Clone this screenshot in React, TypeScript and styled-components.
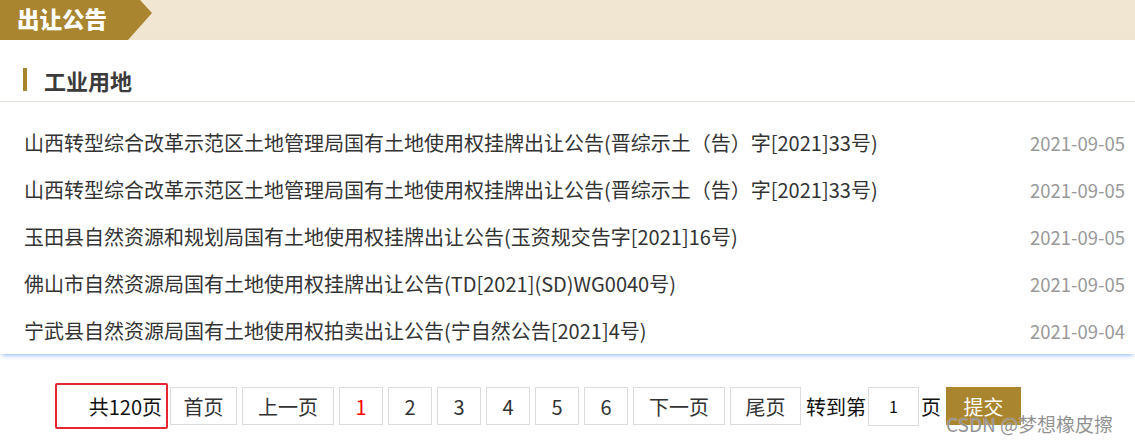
import React from "react";
import styled, { createGlobalStyle } from "styled-components";

const GlobalStyle = createGlobalStyle`
  html, body {
    margin: 0;
    padding: 0;
    background: #fff;
  }
  body {
    font-family: "Noto Sans CJK SC", "Microsoft YaHei", sans-serif;
    color: #333;
  }
`;

interface Notice {
  title: string;
  date: string;
}

const notices: Notice[] = [
  {
    title: "山西转型综合改革示范区土地管理局国有土地使用权挂牌出让公告(晋综示土（告）字[2021]33号)",
    date: "2021-09-05",
  },
  {
    title: "山西转型综合改革示范区土地管理局国有土地使用权挂牌出让公告(晋综示土（告）字[2021]33号)",
    date: "2021-09-05",
  },
  {
    title: "玉田县自然资源和规划局国有土地使用权挂牌出让公告(玉资规交告字[2021]16号)",
    date: "2021-09-05",
  },
  {
    title: "佛山市自然资源局国有土地使用权挂牌出让公告(TD[2021](SD)WG0040号)",
    date: "2021-09-05",
  },
  {
    title: "宁武县自然资源局国有土地使用权拍卖出让公告(宁自然公告[2021]4号)",
    date: "2021-09-04",
  },
];

const pages = [1, 2, 3, 4, 5, 6];

export default function App() {
  return (
    <Page>
      <GlobalStyle />
      <TopBar>
        <TopTag>出让公告</TopTag>
      </TopBar>

      <Panel>
        <SectionTitle>
          <TitleMark />
          <span>工业用地</span>
        </SectionTitle>
        <NoticeList>
          {notices.map((n, i) => (
            <NoticeRow key={i}>
              <NoticeTitle>{n.title}</NoticeTitle>
              <NoticeDate>{n.date}</NoticeDate>
            </NoticeRow>
          ))}
        </NoticeList>
      </Panel>

      <Pager>
        <TotalBox>共120页</TotalBox>
        <PageLink $w={67}>首页</PageLink>
        <PageLink $w={92}>上一页</PageLink>
        {pages.map((p) => (
          <PageLink key={p} $w={44} $active={p === 1}>
            {p}
          </PageLink>
        ))}
        <PageLink $w={92}>下一页</PageLink>
        <PageLink $w={71}>尾页</PageLink>
        <JumpGroup>
          <JumpText>转到第</JumpText>
          <JumpInput defaultValue="1" />
          <JumpText>页</JumpText>
        </JumpGroup>
        <SubmitButton>提交</SubmitButton>
      </Pager>

      <Watermark>CSDN @梦想橡皮擦</Watermark>
    </Page>
  );
}

const Page = styled.div`
  position: relative;
  width: 1135px;
  height: 442px;
  overflow: hidden;
  background: #fff;
`;

const TopBar = styled.div`
  height: 40px;
  background: #f1e6d1;
  display: flex;
`;

const TopTag = styled.div`
  width: 152px;
  height: 40px;
  box-sizing: border-box;
  padding: 0 0 4px 17px;
  background: #a9852f;
  clip-path: polygon(0 0, 140px 0, 152px 13px, 128px 40px, 0 40px);
  color: #fff;
  font-size: 22.5px;
  font-weight: 900;
  line-height: 36px;
`;

const Panel = styled.div`
  background: #fff;
  box-shadow: 0 3px 5px -2px rgba(70, 130, 240, 0.65);
`;

const SectionTitle = styled.div`
  display: flex;
  align-items: center;
  gap: 17px;
  box-sizing: border-box;
  height: 62px;
  padding: 18px 0 0 23px;
  border-bottom: 1px solid #e3dfd6;
  font-size: 22px;
  font-weight: 700;
  color: #3b3b3b;
  line-height: 1;
`;

const TitleMark = styled.i`
  display: block;
  width: 4px;
  height: 23px;
  background: #a9852f;
`;

const NoticeList = styled.ul`
  list-style: none;
  margin: 0;
  padding: 17px 10px 0 24px;
`;

const NoticeRow = styled.li`
  display: flex;
  align-items: center;
  justify-content: space-between;
  height: 47px;
`;

const NoticeTitle = styled.span`
  font-size: 20px;
  color: #333;
  white-space: nowrap;
`;

const NoticeDate = styled.span`
  font-size: 18.5px;
  color: #999;
`;

const Pager = styled.div`
  display: flex;
  align-items: center;
  gap: 5px;
  margin-top: 30px;
  padding-left: 55px;
  height: 44px;
`;

const TotalBox = styled.div`
  box-sizing: border-box;
  width: 113px;
  height: 46px;
  margin-right: -3px;
  border: 2px solid #e5262e;
  border-radius: 2px;
  display: flex;
  align-items: center;
  justify-content: flex-end;
  padding-right: 4px;
  font-size: 20px;
  color: #111;
`;

const PageLink = styled.a<{ $w: number; $active?: boolean }>`
  box-sizing: border-box;
  width: ${(p) => p.$w}px;
  height: 38px;
  border: 1px solid #dcdcdc;
  display: flex;
  align-items: center;
  justify-content: center;
  font-size: 20px;
  color: ${(p) => (p.$active ? "#f00" : "#333")};
  text-decoration: none;
  cursor: pointer;
`;

const JumpGroup = styled.div`
  display: flex;
  align-items: center;
  gap: 2px;
`;

const JumpText = styled.span`
  font-size: 20px;
  color: #111;
`;

const JumpInput = styled.input`
  box-sizing: border-box;
  width: 51px;
  height: 39px;
  border: 1px solid #dcdcdc;
  outline: none;
  text-align: center;
  font-family: "Noto Sans CJK SC", sans-serif;
  font-size: 16px;
  color: #111;
  padding: 0;
`;

const SubmitButton = styled.button`
  box-sizing: border-box;
  width: 75px;
  height: 38px;
  border: none;
  background: #a9852f;
  color: #fff;
  font-family: "Noto Sans CJK SC", sans-serif;
  font-size: 20px;
  padding: 0;
  cursor: pointer;
`;

const Watermark = styled.div`
  position: absolute;
  left: 946px;
  top: 410px;
  font-family: "Noto Sans CJK SC", sans-serif;
  font-size: 19px;
  color: rgba(110, 110, 110, 0.75);
  text-shadow: 0 0 1px #fff;
  white-space: nowrap;
  pointer-events: none;
`;
